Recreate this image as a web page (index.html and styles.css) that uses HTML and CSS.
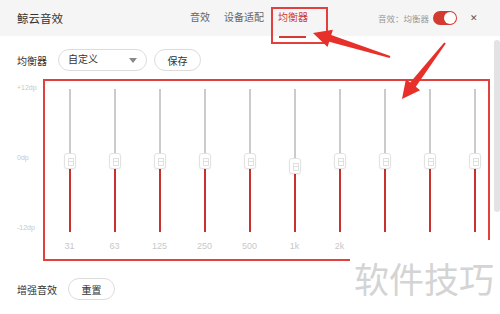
FILE: index.html
```html
<!DOCTYPE html>
<html lang="zh-CN">
<head>
    <meta charset="UTF-8" />
    <meta name="viewport" content="width=device-width, initial-scale=1.0"/>
    <title>鲸云音效</title>
    <link rel="stylesheet" href="styles.css">
</head>
<body>
<div class="window">
    <header class="titlebar">
        <h1 class="title">鲸云音效</h1>
        <nav class="tabs">
            <a class="tab">音效</a>
            <a class="tab">设备适配</a>
            <a class="tab active">均衡器</a>
        </nav>
        <div class="status">
            <span class="status-text">音效：均衡器</span>
            <span class="toggle"><span class="knob"></span></span>
            <span class="close">✕</span>
        </div>
    </header>

    <main class="content">
        <div class="toolbar">
            <span class="label">均衡器</span>
            <div class="select">自定义<span class="caret"></span></div>
            <button class="pill-btn">保存</button>
        </div>

        <div class="eq">
            <div class="axis">
                <span>+12dp</span>
                <span>0dp</span>
                <span>-12dp</span>
            </div>
            <div class="band" style="--pos:50%"><div class="track"><span class="thumb"></span></div><span class="freq">31</span></div>
            <div class="band" style="--pos:50%"><div class="track"><span class="thumb"></span></div><span class="freq">63</span></div>
            <div class="band" style="--pos:50%"><div class="track"><span class="thumb"></span></div><span class="freq">125</span></div>
            <div class="band" style="--pos:50%"><div class="track"><span class="thumb"></span></div><span class="freq">250</span></div>
            <div class="band" style="--pos:50%"><div class="track"><span class="thumb"></span></div><span class="freq">500</span></div>
            <div class="band" style="--pos:53.5%"><div class="track"><span class="thumb"></span></div><span class="freq">1k</span></div>
            <div class="band" style="--pos:50%"><div class="track"><span class="thumb"></span></div><span class="freq">2k</span></div>
            <div class="band" style="--pos:50%"><div class="track"><span class="thumb"></span></div><span class="freq">4k</span></div>
            <div class="band" style="--pos:50%"><div class="track"><span class="thumb"></span></div><span class="freq">8k</span></div>
            <div class="band" style="--pos:50%"><div class="track"><span class="thumb"></span></div><span class="freq">16k</span></div>
        </div>

        <div class="toolbar enhance">
            <span class="label">增强音效</span>
            <button class="pill-btn">重置</button>
        </div>
    </main>

    <div class="scrollbar"></div>

    <!-- tutorial markup drawn over the screenshot -->
    <div class="mark mark-tab"></div>
    <div class="mark mark-eq"></div>
    <svg class="arrows" width="500" height="314" viewBox="0 0 500 314">
        <polygon points="313,33 332.9,29.8 331.2,35.1 390.3,56 389.7,58 329.2,41.7 327.5,47"/>
        <polygon points="402,99 420.1,90.2 415.8,86.8 445.8,43.6 444.2,42.4 410.2,82.6 405.9,79.2"/>
    </svg>
    <div class="watermark">软件技巧</div>
</div>
</body>
</html>
```

FILE: styles.css
```css
* {
  box-sizing: border-box;
}

body {
  margin: 0;
  font-family: "Liberation Sans", "Noto Sans CJK SC", sans-serif;
  color: #333;
  background: #fff;
}

.window {
  position: relative;
  width: 500px;
  height: 314px;
  overflow: hidden;
  background: #fff;
}

/* title bar */

.titlebar {
  display: flex;
  align-items: center;
  height: 36px;
  padding: 0 22px 0 17px;
  background: #f5f5f5;
}

.title {
  margin: 0;
  font-size: 11.5px;
  font-weight: normal;
  color: #333;
}

.tabs {
  display: flex;
  gap: 14px;
  margin-left: 127px;
}

.tab {
  position: relative;
  font-size: 10px;
  color: #666;
  line-height: 36px;
}

.tab.active {
  color: #d33a31;
}

.tab.active::after {
  content: "";
  position: absolute;
  left: 1px;
  right: 2px;
  bottom: -2px;
  height: 2px;
  background: #d33a31;
}

.status {
  display: flex;
  align-items: center;
  margin-left: auto;
}

.status-text {
  font-size: 8.5px;
  color: #999;
}

.toggle {
  display: flex;
  align-items: center;
  justify-content: flex-end;
  width: 24px;
  height: 14px;
  margin-left: 4px;
  padding: 0 1px;
  border-radius: 7px;
  background: #d33a31;
}

.knob {
  width: 12px;
  height: 12px;
  border-radius: 50%;
  background: #fff;
}

.close {
  margin-left: 13px;
  font-size: 9px;
  color: #555;
}

/* content */

.content {
  padding-top: 13px;
}

.toolbar {
  display: flex;
  align-items: center;
  padding-left: 17px;
}

.label {
  font-size: 10px;
  color: #333;
}

.select {
  position: relative;
  width: 89px;
  height: 22px;
  margin-left: 11px;
  padding-left: 9px;
  border: 1px solid #dcdcdc;
  border-radius: 11px;
  font-size: 10px;
  line-height: 20px;
  color: #333;
}

.caret {
  position: absolute;
  right: 9px;
  top: 8px;
  border-left: 4px solid transparent;
  border-right: 4px solid transparent;
  border-top: 5px solid #888;
}

.pill-btn {
  width: 47px;
  height: 22px;
  margin-left: 7px;
  padding: 0;
  border: 1px solid #dcdcdc;
  border-radius: 11px;
  background: #fff;
  font-family: inherit;
  font-size: 10px;
  color: #333;
}

.enhance {
  margin-top: 27px;
}

.enhance .pill-btn {
  margin-left: 11px;
}

/* equalizer */

.eq {
  display: flex;
  margin-top: 18px;
}

.axis {
  display: flex;
  flex-direction: column;
  justify-content: space-between;
  width: 47px;
  height: 150px;
  margin-top: -6px;
  padding-left: 17px;
  font-size: 7px;
  line-height: 10px;
  color: #c8c8c8;
}

.band {
  display: flex;
  flex-direction: column;
  align-items: center;
  width: 45px;
}

.track {
  position: relative;
  width: 2px;
  height: 143px;
  background: linear-gradient(#cbcbcb 0 var(--pos), #c8312d var(--pos) 100%);
}

.thumb {
  position: absolute;
  left: -5px;
  top: calc(var(--pos) - 8px);
  width: 12px;
  height: 16px;
  border: 1px solid #e2e2e2;
  border-radius: 3px;
  background: #fff;
  box-shadow: 0 1px 2px rgba(0,0,0,0.06);
}

.thumb::before {
  content: "";
  position: absolute;
  left: 3px;
  top: 4px;
  width: 4px;
  height: 6px;
  border: 1px solid #e0e0e0;
  background: linear-gradient(transparent 2px, #e0e0e0 2px 3px, transparent 3px);
}

.freq {
  margin-top: 9px;
  font-size: 9px;
  line-height: 10px;
  color: #c8c8c8;
}

.scrollbar {
  position: absolute;
  left: 494px;
  top: 40px;
  width: 6px;
  height: 172px;
  border-radius: 3px;
  background: #e3e3e3;
}

/* overlays */

.mark {
  position: absolute;
  border: 2px solid #e2403c;
}

.mark-tab {
  left: 271px;
  top: 7px;
  width: 57px;
  height: 37px;
}

.mark-eq {
  left: 43px;
  top: 79px;
  width: 447px;
  height: 182px;
}

.arrows {
  position: absolute;
  left: 0;
  top: 0;
  fill: #e8302a;
}

.watermark {
  position: absolute;
  left: 350px;
  top: 240px;
  right: 0;
  bottom: 0;
  display: flex;
  align-items: center;
  padding-left: 4px;
  background: #fff;
  font-family: "Noto Sans CJK SC", sans-serif;
  font-size: 35px;
  color: #d4d4d4;
  line-height: 1;
}
```
